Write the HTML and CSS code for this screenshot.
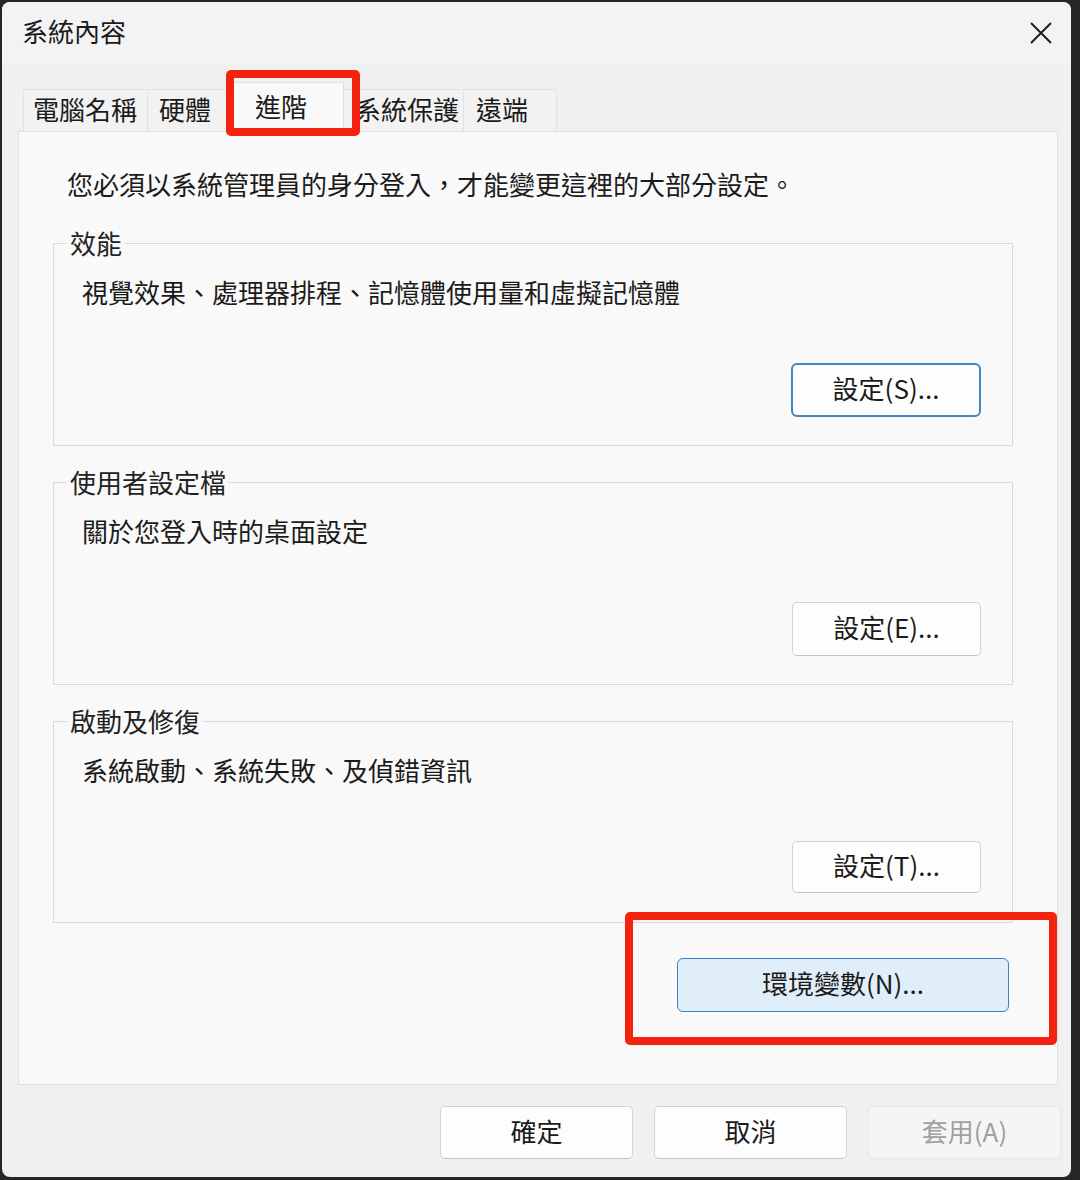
FILE: index.html
```html
<!DOCTYPE html>
<html lang="zh-Hant">
<head>
<meta charset="utf-8">
<title>系統內容</title>
<link rel="stylesheet" href="styles.css">
</head>
<body>
<div class="window">
  <div class="titlebar">
    <span class="title">系統內容</span>
    <svg class="close" width="22" height="22" viewBox="0 0 22 22"><path d="M1 1 L21 21 M21 1 L1 21" stroke="#1c1c1c" stroke-width="1.9" fill="none"/></svg>
  </div>
  <div class="main">
    <div class="tabs">
      <div class="tab tab-name">電腦名稱</div>
      <div class="tab tab-hw">硬體</div>
      <div class="tab tab-sel">進階</div>
      <div class="tab tab-prot">系統保護</div>
      <div class="tab tab-remote">遠端</div>
    </div>
    <div class="panel">
      <p class="intro">您必須以系統管理員的身分登入，才能變更這裡的大部分設定。</p>
      <fieldset class="group">
        <legend>效能</legend>
        <div class="group-body">
          <p class="desc">視覺效果、處理器排程、記憶體使用量和虛擬記憶體</p>
          <div class="btn-row"><button class="btn btn-focus">設定(S)...</button></div>
        </div>
      </fieldset>
      <fieldset class="group">
        <legend>使用者設定檔</legend>
        <div class="group-body">
          <p class="desc">關於您登入時的桌面設定</p>
          <div class="btn-row"><button class="btn">設定(E)...</button></div>
        </div>
      </fieldset>
      <fieldset class="group">
        <legend>啟動及修復</legend>
        <div class="group-body group-body-short">
          <p class="desc">系統啟動、系統失敗、及偵錯資訊</p>
          <div class="btn-row"><button class="btn btn-short">設定(T)...</button></div>
        </div>
      </fieldset>
      <div class="env-row"><button class="btn btn-env">環境變數(N)...</button></div>
    </div>
  </div>
  <div class="footer">
    <button class="btn btn-foot">確定</button>
    <button class="btn btn-foot">取消</button>
    <button class="btn btn-foot btn-disabled">套用(A)</button>
  </div>
  <div class="mark mark-tab"></div>
  <div class="mark mark-env"></div>
</div>
</body>
</html>
```
FILE: styles.css
```css
* { box-sizing: border-box; }
html, body { margin: 0; padding: 0; }
body {
  background: #262626;
  width: 1080px;
  height: 1180px;
  overflow: hidden;
  font-family: "Noto Sans CJK TC", "Noto Sans", sans-serif;
  color: #1b1b1b;
  font-size: 26px;
  line-height: 30px;
}
.window {
  position: relative;
  margin: 2px 9px 3px 2px;
  width: 1069px;
  height: 1175px;
  background: #f0f0f0;
  border-radius: 8px;
  display: flex;
  flex-direction: column;
}
.titlebar {
  height: 62px;
  display: flex;
  align-items: center;
  justify-content: space-between;
  padding: 0 19px 0 20px;
  background: #f3f3f3;
  border-radius: 8px 8px 0 0;
}
.title { font-size: 26px; padding-bottom: 4px; }
.close { display: block; }
.main {
  margin: 18px 13px 0 16px;
  display: flex;
  flex-direction: column;
}
.tabs {
  display: flex;
  align-items: flex-end;
  padding-left: 5px;
  height: 49px;
}
.tab {
  height: 42px;
  line-height: 38px;
  background: #f2f2f2;
  border: 1px solid #e2e2e2;
  border-bottom: none;
  white-space: nowrap;
  color: #1b1b1b;
}
.tab-name { width: 125px; padding-left: 9px; }
.tab-hw { width: 80px; padding-left: 11px; border-left: none; }
.tab-sel {
  position: relative;
  z-index: 1;
  width: 116px;
  height: 50px;
  line-height: 45px;
  margin-bottom: -1px;
  padding-left: 26px;
  background: #f9f9f9;
  border-color: #e0e0e0;
}
.tab-prot { width: 120px; padding-left: 11px; border-left: none; }
.tab-remote { width: 93px; padding-left: 12px; border-left: none; }
.panel {
  height: 954px;
  background: #f9f9f9;
  border: 1px solid #e0e0e0;
  padding-top: 37px;
  display: flex;
  flex-direction: column;
}
.intro {
  margin: 0 0 29px 48px;
}
.group {
  margin: 0 44px 21px 34px;
  padding: 0;
  border: 1px solid #dadada;
  min-width: 0;
}
.group legend {
  margin-left: 13px;
  padding: 0 3px 1px;
  line-height: 29px;
  color: #222;
}
.group-body {
  padding: 19px 31px 28px 28px;
}
.group-body-short { padding-bottom: 29px; }
.desc { margin: 0; }
.btn-row {
  display: flex;
  justify-content: flex-end;
  margin-top: 56px;
}
.btn {
  font-family: "Noto Sans CJK TC", "Noto Sans", sans-serif;
  font-size: 26px;
  line-height: 30px;
  color: #1b1b1b;
  background: #fdfdfd;
  border: 1px solid #d3d3d3;
  border-bottom-color: #c3c3c3;
  border-radius: 5px;
  width: 189px;
  height: 54px;
  padding: 0 0 4px;
}
.btn-focus {
  width: 190px;
  border: 2px solid #4686c4;
  border-radius: 6px;
}
.btn-short { height: 52px; }
.env-row {
  display: flex;
  justify-content: flex-end;
  margin: 14px 48px 0 0;
}
.btn-env {
  width: 332px;
  height: 54px;
  background: #e0eef9;
  border: 1.5px solid #3f80c2;
  border-radius: 6px;
}
.footer {
  display: flex;
  justify-content: flex-end;
  gap: 21px;
  margin-top: 21px;
  padding-right: 10px;
}
.btn-foot { width: 193px; height: 53px; }
.btn-disabled {
  color: #a0a0a0;
  background: #f5f5f5;
  border-color: #e8e8e8;
}
.mark {
  position: absolute;
  z-index: 2;
  border: 8px solid #f3230f;
  border-radius: 5px;
  pointer-events: none;
}
.mark-tab { left: 224px; top: 68px; width: 134px; height: 66px; }
.mark-env { left: 623px; top: 910px; width: 432px; height: 133px; }
```
